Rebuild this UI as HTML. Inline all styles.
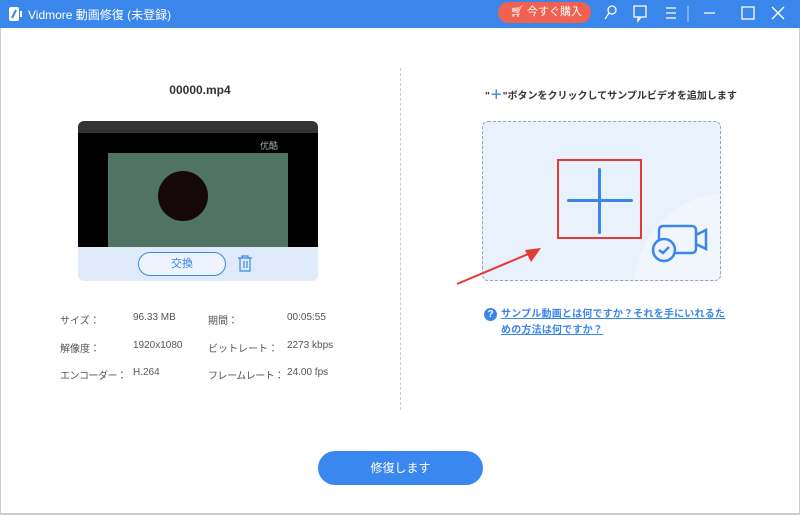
<!DOCTYPE html><html><head><meta charset="utf-8"><style>
body{margin:0;width:800px;height:515px;position:relative;overflow:hidden;background:#fff;font-family:"Liberation Sans","Noto Sans CJK JP",sans-serif;}
.a{position:absolute}
.t{font-size:10px;color:#555;white-space:nowrap}
.b{font-size:11px;color:#333;font-weight:bold}
</style></head><body>
<div class="a" style="left:0;top:0;width:800px;height:28px;background:#3a86ea"></div>
<div class="a" style="left:0;top:28px;width:1px;height:487px;background:#ccc"></div>
<div class="a" style="right:0;top:28px;width:1px;height:487px;background:#ccc"></div>
<div class="a" style="left:0;top:513px;width:800px;height:2px;background:#ccc"></div>
<svg class="a" style="left:9px;top:6px" width="14" height="16"><rect x="0" y="1" width="10" height="14" rx="2" fill="#fff"/><path d="M3 12 L7 4" stroke="#3a86ea" stroke-width="2"/><rect x="11" y="5" width="2" height="6" fill="#fff"/></svg>
<div class="a" style="left:28px;top:6px;color:#fff;font-size:12px">Vidmore 動画修復 (未登録)</div>
<div class="a" style="left:498px;top:2px;width:93px;height:21px;border-radius:11px;background:#f0624f;color:#fff;font-size:11px;line-height:21px"><span style="margin-left:12px">🛒︎</span> 今すぐ購入</div>
<svg class="a" style="left:600px;top:0" width="200" height="28" fill="none" stroke="#fff" stroke-width="1.3"><circle cx="12" cy="10" r="4"/><path d="M9 13 L5 19"/><rect x="34" y="6" width="12" height="11"/><path d="M38 17v4l3-4"/><path d="M66 8h10M66 13h10M66 18h10"/><path d="M88 6v16" stroke="#9cc1f3"/><path d="M104 13h11"/><rect x="142" y="7" width="12" height="12"/><path d="M172 7l12 12M184 7l-12 12"/></svg>
<div class="a b" style="left:150px;top:83px;width:100px;text-align:center;font-size:12px">00000.mp4</div>
<div class="a" style="left:78px;top:121px;width:240px;height:160px;border-radius:6px;overflow:hidden;background:#dfeafb">
<div style="height:12px;background:#333"></div>
<div style="height:114px;background:#000;position:relative">
<div class="a" style="left:30px;top:20px;width:180px;height:94px;background:#4f7464"></div>
<div class="a" style="left:80px;top:38px;width:50px;height:50px;border-radius:50%;background:#140808"></div>
<div class="a" style="left:182px;top:6px;color:#aaa;font-size:9px">优酷</div></div>
<div class="a" style="left:60px;top:131px;width:86px;height:22px;border:1px solid #3a86ea;border-radius:12px;text-align:center;line-height:22px;font-size:11px;color:#3a86ea;background:#eef4fd">交換</div>
<svg class="a" style="left:158px;top:134px" width="18" height="18" fill="none" stroke="#3a86ea" stroke-width="1.2"><path d="M2 3h14M6 3V1h6v2M4 3v13h10V3M8 6v7M11 6v7"/></svg>
</div>
<div class="a t" style="left:60px;top:312px">サイズ：</div><div class="a t" style="left:133px;top:312px">96.33 MB</div><div class="a t" style="left:208px;top:312px">期間：</div><div class="a t" style="left:287px;top:312px">00:05:55</div>
<div class="a t" style="left:60px;top:340px">解像度：</div><div class="a t" style="left:133px;top:340px">1920x1080</div><div class="a t" style="left:208px;top:340px">ビットレート：</div><div class="a t" style="left:287px;top:340px">2273 kbps</div>
<div class="a t" style="left:60px;top:367px;letter-spacing:-0.5px">エンコーダー：</div><div class="a t" style="left:133px;top:367px">H.264</div><div class="a t" style="left:208px;top:367px;letter-spacing:-0.5px">フレームレート：</div><div class="a t" style="left:287px;top:367px">24.00 fps</div>
<div class="a" style="left:400px;top:68px;height:342px;border-left:1px dashed #ccc"></div>
<div class="a b" style="left:485px;top:84px;font-size:10px;white-space:nowrap">"<span style="color:#3a86ea;font-size:13px">＋</span>"ボタンをクリックしてサンプルビデオを追加します</div>
<div class="a" style="left:482px;top:121px;width:237px;height:158px;border:1.5px dashed #8fa6bd;border-radius:6px;background:#e8f1fc;overflow:hidden"><div class="a" style="left:150px;top:70px;width:200px;height:200px;border-radius:50%;background:#f1f6fd"></div></div>
<div class="a" style="left:557px;top:159px;width:81px;height:76px;border:2px solid #e53935"></div>
<div class="a" style="left:598px;top:168px;width:3px;height:66px;background:#3a86ea;border-radius:2px"></div>
<div class="a" style="left:567px;top:199px;width:66px;height:3px;background:#3a86ea;border-radius:2px"></div>
<svg class="a" style="left:650px;top:222px" width="60" height="44" fill="none" stroke="#3a86ea" stroke-width="2.5"><rect x="9" y="4" width="37" height="27" rx="4"/><path d="M46 13l10-5v19l-10-5"/><circle cx="14" cy="28" r="11" fill="#eef4fd"/><path d="M9 28l4 3 6-6"/></svg>
<svg class="a" style="left:455px;top:240px" width="90" height="50"><path d="M2 44 L78 12" stroke="#e53935" stroke-width="2"/><path d="M86 8 L70 10 L76 22Z" fill="#e53935"/></svg>
<div class="a" style="left:484px;top:308px;width:13px;height:13px;border-radius:50%;background:#3a86ea;color:#fff;font-size:10px;font-weight:bold;text-align:center;line-height:13px">?</div>
<div class="a" style="left:501px;top:307px;color:#3a86ea;font-size:10px;font-weight:bold;text-decoration:underline;line-height:16px;white-space:nowrap;letter-spacing:0.2px">サンプル動画とは何ですか？それを手にいれるた<br>めの方法は何ですか？</div>
<div class="a" style="left:318px;top:451px;width:165px;height:34px;border-radius:17px;background:#3a87ef;color:#fff;font-size:12px;text-align:center;line-height:34px">修復します</div>
</body></html>
